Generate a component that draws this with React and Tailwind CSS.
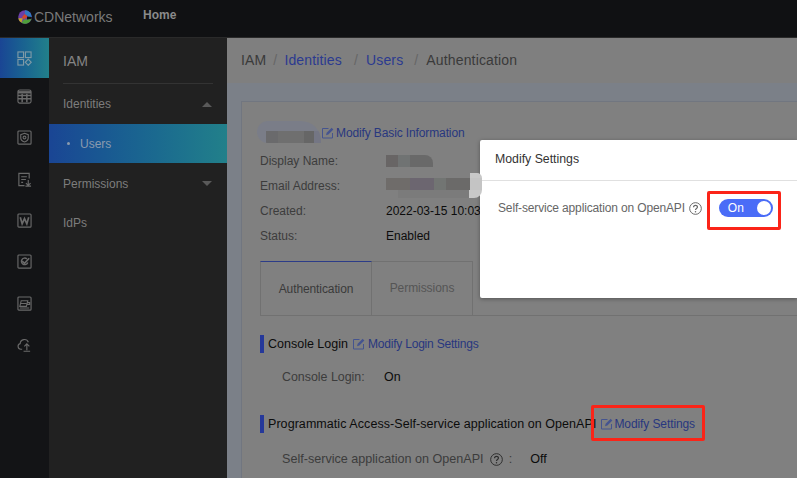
import React from "react";

const Ic = ({ children, className = "" }) => (
  <svg viewBox="0 0 16 16" fill="none" stroke="#6a6a6a" strokeWidth="1.2" className={`w-[15px] h-[15px] ${className}`}>
    {children}
  </svg>
);

const icons = [
  <Ic key="a"><g stroke="#7f9aa6"><rect x="1" y="1" width="6" height="6" /><rect x="9" y="1" width="6" height="6" /><rect x="1" y="9" width="6" height="6" /><path d="M12 8.600 15.200 12 12 15.300 8.800 12Z" /></g></Ic>,
  <Ic key="b"><rect x="1" y="1" width="14" height="14" rx="2" /><path d="M1 3.500h14" strokeWidth="2.500" /><path d="M1 7h14M1 10.500h14M5.500 5v9M10.500 5v9" strokeWidth="1.600" /></Ic>,
  <Ic key="c"><rect x="1" y="1" width="14" height="14" rx="1" /><path d="M8 3.500 12 5v3.500c0 2-2 3.500-4 4.200-2-.7-4-2.200-4-4.200V5Z" /><circle cx="8" cy="8" r="1.500" /></Ic>,
  <Ic key="d"><path d="M13 7V1.500H2v13h6M4.500 5h6M4.500 8h5M4.500 11h2M12 8.500V14M9.500 11.800 12 14.300l2.500-2.500M9 15h6" /></Ic>,
  <Ic key="e"><rect x="1" y="1" width="14" height="14" rx="1" /><path d="M3.500 4.500 5.500 11.500 8 6l2.500 5.500 2-7" strokeWidth="1.800" /></Ic>,
  <Ic key="f"><rect x="1" y="1" width="14" height="14" rx="1" /><path d="M10.500 5.200A3.500 3.500 0 1 0 11.500 9" strokeWidth="1.500" /><path d="M5.500 7.500 8 10l5-5.500" strokeWidth="1.800" /></Ic>,
  <Ic key="g"><rect x="1" y="1" width="14" height="14" rx="1" /><path d="M4.500 5h7l-1.500 6H3ZM4 8h6M11 7h2.500v2H11M3 12.800h10" /></Ic>,
  <Ic key="h"><path d="M5.500 13H4a3 3 0 0 1-.6-5.900 4.500 4.500 0 0 1 8.700-1.500M10.500 14V7.500M7.800 10l2.700-2.700 2.700 2.700M7 15.200h7" /></Ic>,
];

const EditIcon = ({ color = "#45548f" }) => (
  <svg viewBox="0 0 12 12" fill="none" stroke={color} strokeWidth="1" className="w-[12px] h-[12px] shrink-0">
    <path d="M10.500 6v5h-10V1.500h6" />
    <path d="M4 8.200 4.600 5.800 9.600.8l1.800 1.800-5 5Z" fill={color} stroke="none" />
  </svg>
);

const Help = ({ color = "#333", size = "w-[12px] h-[12px]" }) => (
  <svg viewBox="0 0 12 12" fill="none" stroke={color} className={`${size} shrink-0`}>
    <circle cx="6" cy="6" r="5.400" strokeWidth="0.900" />
    <path d="M4.200 4.800c0-2.300 3.600-2.300 3.600-.1 0 1.300-1.800 1.300-1.800 2.700" strokeWidth="1.100" />
    <circle cx="6" cy="9.100" r=".7" fill={color} stroke="none" />
  </svg>
);

const Logo = () => (
  <svg viewBox="0 0 14 14" className="w-[14px] h-[14px]">
    <circle cx="7" cy="7" r="6.800" fill="#6b3fa8" />
    <path d="M7 .2A6.800 6.800 0 0 1 13.800 7H9.500A2.500 2.500 0 0 0 7 4.500Z" fill="#2f79c0" />
    <path d="M.3 8.200h4.500L3.500 12.800A6.800 6.800 0 0 1 .3 8.200Z" fill="#c2a52a" />
    <path d="M3.500 12.800 6 9.500h3l4.500-.8A6.800 6.800 0 0 1 3.500 12.800Z" fill="#4f9f3a" />
    <path d="M6.500 4 9.800 6.400 6.200 9.300 3.800 7.500Z" fill="#d0482a" />
    <path d="M9 6.600 13.800 7l-.3 1.700L9 9.500Z" fill="#101113" />
  </svg>
);

const Mosaic = ({ cells, className = "" }) => (
  <div className={`flex ${className}`}>
    {cells.map((c, i) => (
      <div key={i} className="h-full shrink-0" style={{ width: c[0], backgroundColor: c[1] }} />
    ))}
  </div>
);

const Row = ({ label, children }) => (
  <div className="flex items-center h-[25px]">
    <span className="w-[126px] text-[#3c3c3c]">{label}</span>
    <span className="text-[#0c0c0c] whitespace-nowrap">{children}</span>
  </div>
);

const SectionTitle = ({ children, link, className = "", titleClass = "", linkClass = "" }) => (
  <div className={`flex items-center h-[18px] whitespace-nowrap ${className}`}>
    <div className="w-[4px] h-[18px] bg-[#25389a] mr-[4px] shrink-0" />
    <span className={`text-[12.500px] text-[#0c0c0c] ${titleClass}`}>{children}</span>
    <span className={`flex items-center ml-[5px] text-[#28377f] ${linkClass}`}>
      <EditIcon />
      {link}
    </span>
  </div>
);

export default function App() {
  return (
    <div className="relative w-[797px] h-[478px] overflow-hidden bg-[#808080] text-[12px] font-['Liberation_Sans',Arial,sans-serif]">
      <header className="h-[38px] bg-[#101113] border-b border-[#2a2a2a] flex items-center">
        <div className="flex items-center ml-[18px] w-[125px] -mt-[3px]">
          <Logo />
          <span className="ml-[2px] text-[14px] text-[#7a7a7a]">CDNetworks</span>
        </div>
        <span className="text-[12px] font-bold text-[#8a8a8a] -mt-[8px]">Home</span>
      </header>

      <div className="flex h-[440px]">
        <aside className="w-[49px] bg-[#131416] shrink-0 flex flex-col">
          <div className="h-[40px] flex items-center justify-center shrink-0 bg-gradient-to-r from-[#1a4594] to-[#22808a]">
            {icons[0]}
          </div>
          <div className="-mt-[2px] flex flex-col">
            {icons.slice(1).map((icon, i) => (
              <div key={i} className="h-[41.300px] flex items-center justify-center shrink-0">
                {icon}
              </div>
            ))}
          </div>
        </aside>

        <nav className="w-[178px] bg-[#212121] shrink-0 text-[#7d7d7d]">
          <div className="mx-[14px] h-[46px] flex items-center text-[14px] text-[#858585] border-b border-[#333] pt-[1px]">IAM</div>
          <div className="h-[40px] pl-[14px] pr-[15px] flex items-center justify-between">
            Identities
            <span className="w-0 h-0 border-x-[5px] border-x-transparent border-b-[5px] border-b-[#5a5a5a]" />
          </div>
          <div className="h-[39px] pl-[18px] flex items-center bg-gradient-to-r from-[#1a4594] to-[#22808a] text-[#8a9aae]">
            <span className="w-[3px] h-[3px] rounded-full bg-[#8a9aae] mr-[10px]" />
            Users
          </div>
          <div className="h-[40px] pl-[14px] pr-[15px] pt-[1px] flex items-center justify-between">
            Permissions
            <span className="w-0 h-0 border-x-[5px] border-x-transparent border-t-[5px] border-t-[#5a5a5a]" />
          </div>
          <div className="h-[39px] pl-[14px] flex items-center">IdPs</div>
        </nav>

        <main className="flex-1 min-w-0 flex flex-col">
          <div className="h-[45px] shrink-0 bg-[#7f7f7f] pl-[14px] flex items-center text-[14px] text-[#3a3a3a] tracking-[0.15px] whitespace-nowrap">
            <span>IAM</span>
            <span className="text-[#666] ml-[7px]">/</span>
            <span className="text-[#2b3a90] ml-[7px]">Identities</span>
            <span className="text-[#666] ml-[12px]">/</span>
            <span className="text-[#2b3a90] ml-[8px]">Users</span>
            <span className="text-[#666] ml-[11px]">/</span>
            <span className="ml-[8px]">Authentication</span>
          </div>

          <div className="flex-1 bg-[#7b8088] pl-[14px] pt-[18px]">
            <div className="h-full bg-[#808080] border-l border-t border-[#717680] pl-[18px]">
              <div className="flex items-end h-[41px]">
                <div className="w-[64px] h-[22px] -ml-[3px] rounded-l-[11px] rounded-tr-[20px] overflow-hidden bg-[#7a7d88] flex flex-col justify-end">
                  <Mosaic className="h-[12px] pl-[9px]" cells={[[12, "#6a6a6c"], [26, "#6f6f6f"], [10, "#666666"], [7, "#747684"]]} />
                </div>
                <span className="flex items-center gap-[2px] mb-[1px] ml-[1px] text-[#28377f] tracking-[-0.120px]">
                  <EditIcon />
                  Modify Basic Information
                </span>
              </div>
              <div className="mt-[5px]">
                <Row label="Display Name:"><Mosaic className="w-[47px] h-[12px] rounded-tr-[8px] overflow-hidden" cells={[[12, "#686565"], [12, "#707373"], [23, "#696969"]]} /></Row>
                <Row label="Email Address:"><span className="block h-[1px]" /></Row>
                <Row label="Created:">2022-03-15 10:03:</Row>
                <Row label="Status:">Enabled</Row>
              </div>

              <div className="mt-[13px] h-[55px] flex border-b border-[#717171]">
                <div className="w-[112px] border-x border-t border-[#717171] border-t-[#2c3c88] flex items-center justify-center text-[#3a3a3a] tracking-[-0.100px]">Authentication</div>
                <div className="w-[101px] border-r border-t border-[#717171] flex items-center justify-center text-[#555] pb-[2px] tracking-[-0.060px]">Permissions</div>
              </div>

              <SectionTitle link="Modify Login Settings" className="mt-[19px]" linkClass="gap-[3px] tracking-[-0.200px]">Console Login</SectionTitle>
              <div className="flex items-center h-[16px] mt-[16px] pl-[22px] text-[12.400px]">
                <span className="w-[102px] text-[#3c3c3c]">Console Login:</span>
                <span className="text-[#0c0c0c]">On</span>
              </div>
              <SectionTitle link="Modify Settings" className="mt-[30px]" titleClass="tracking-[0.060px]" linkClass="ml-[5px] gap-[1px] tracking-[-0.100px]">Programmatic Access-Self-service application on OpenAPI</SectionTitle>
              <div className="flex items-center h-[16px] mt-[18px] pl-[22px] whitespace-nowrap text-[12.600px]">
                <span className="text-[#3c3c3c]">Self-service application on OpenAPI</span>
                <span className="ml-[6px]"><Help color="#2c2c2c" size="w-[13px] h-[13px]" /></span>
                <span className="ml-[6px] text-[#3c3c3c]">:</span>
                <span className="ml-[18px] text-[#0c0c0c]">Off</span>
              </div>
            </div>
          </div>
        </main>
      </div>

      {/* Dialog */}
      <div className="absolute left-[480px] top-[140px] right-0 h-[158px] bg-white rounded-l-[2px] shadow-[0_1px_4px_rgba(0,0,0,0.35)]">
        <div className="h-[41px] pl-[15px] pb-[2px] flex items-center text-[12.300px] text-[#333] border-b border-[#e0e0e0]">Modify Settings</div>
        <div className="flex items-center pl-[18px] mt-[18px] text-[#666] whitespace-nowrap">
          <span className="tracking-[-0.150px]">Self-service application on OpenAPI</span>
          <span className="ml-[4px]"><Help color="#666" size="w-[13px] h-[13px]" /></span>
          <div className="ml-[17px] w-[54px] h-[18px] rounded-full bg-[#4a6cf7] flex items-center justify-between pl-[9px] pr-[2px] text-white text-[12px] font-medium">
            On
            <span className="w-[14px] h-[14px] rounded-full bg-white" />
          </div>
        </div>
      </div>

      {/* Pixelated redaction over the dialog edge */}
      <div className="absolute left-[386px] top-[173px] w-[96px] h-[25px] flex flex-col">
        <div className="self-end w-[12px] h-[5px] rounded-tr-[8px] bg-[#c8c8c8]" />
        <Mosaic
          className="h-[12px] overflow-hidden"
          cells={[[24, "#6f6c6a"], [24, "#6c6670"], [12, "#727573"], [24, "#6b6a69"], [12, "#c4c4c4"]]}
        />
        <div className="ml-[12px] w-[84px] h-[8px] rounded-br-[8px] bg-[linear-gradient(90deg,#7b7b7b_85%,#c8c8c8_85%)]" />
      </div>

      {/* Annotation boxes */}
      <div className="absolute left-[707px] top-[191px] w-[74px] h-[39px] border-[3px] border-[#fb2418] rounded-[2px]" />
      <div className="absolute left-[591px] top-[405px] w-[114px] h-[36px] border-[3px] border-[#fb2418] rounded-[2px]" />
    </div>
  );
}
